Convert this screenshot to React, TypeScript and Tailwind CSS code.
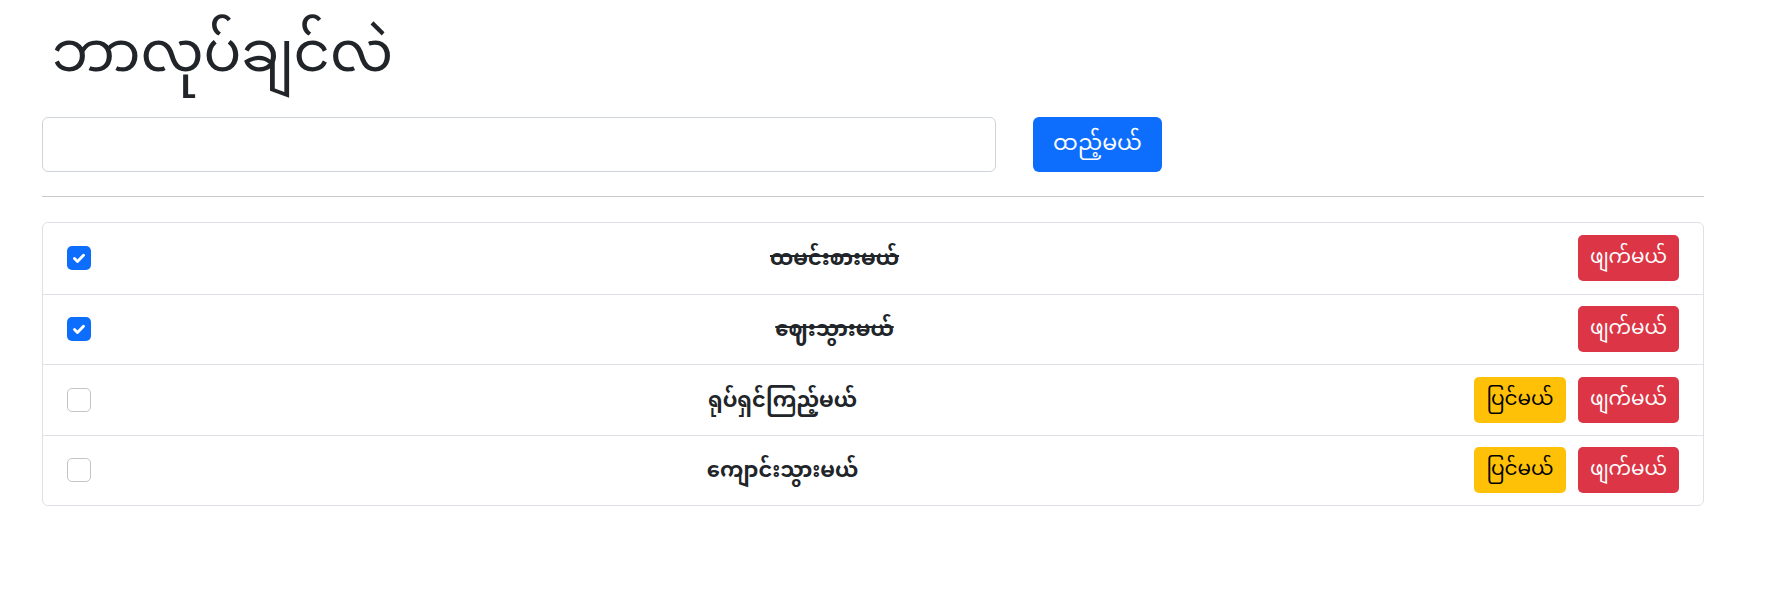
import React from "react";

type Todo = { title: string; done: boolean };

const todos: Todo[] = [
  { title: "ထမင်းစားမယ်", done: true },
  { title: "ဈေးသွားမယ်", done: true },
  { title: "ရုပ်ရှင်ကြည့်မယ်", done: false },
  { title: "ကျောင်းသွားမယ်", done: false },
];

const font = "font-['Noto_Sans_Myanmar','Noto_Sans',sans-serif]";

const CheckBox = ({ checked }: { checked: boolean }) =>
  checked ? (
    <span className="w-6 h-6 rounded-[5px] bg-[#0d6efd] flex items-center justify-center shrink-0">
      <svg width="18" height="18" viewBox="0 0 20 20" fill="none">
        <path
          d="M5 10.5l3.3 3.3L15 7"
          stroke="#fff"
          strokeWidth="3.2"
          strokeLinecap="round"
          strokeLinejoin="round"
        />
      </svg>
    </span>
  ) : (
    <span className="w-6 h-6 rounded-[5px] border border-[#c4c4c4] bg-white shrink-0" />
  );

const App = () => {
  return (
    <div className={`w-full min-h-[598px] bg-white text-[#212529] ${font}`}>
      <div className="w-[1662px] ml-[42px] pt-[8px]">
        <h1 className="h-[109px] pl-[10px] text-[56px] font-normal leading-[100px]">
          ဘာလုပ်ချင်လဲ
        </h1>
        <div className="flex items-center gap-[37px]">
          <input
            className="w-[954px] h-[55px] border border-[#ced4da] rounded-[6px] px-3 outline-none"
            type="text"
          />
          <button className="w-[129px] h-[55px] rounded-[6px] bg-[#0d6efd] text-white text-[22px] pt-[2px]">
            ထည့်မယ်
          </button>
        </div>
        <hr className="mt-[24px] mb-[25px] border-t border-[#c8c9ca]" />
        <ul className="border border-[#dee2e6] rounded-[6px]">
          {todos.map((item, index) => (
            <li
              key={index}
              className={`flex items-center gap-3 h-[70.5px] px-6 ${
                index > 0 ? "border-t border-[#dee2e6]" : ""
              }`}
            >
              <CheckBox checked={item.done} />
              <span
                className={`flex-1 text-center text-[21px] font-bold pt-[5px] ${
                  item.done ? "line-through" : ""
                }`}
              >
                {item.title}
              </span>
              {!item.done && (
                <button className="w-[92px] h-[46px] rounded-[5px] bg-[#ffc107] text-black text-[20px] pt-[2px]">
                  ပြင်မယ်
                </button>
              )}
              <button className="w-[101px] h-[46px] rounded-[5px] bg-[#dc3545] text-white text-[20px] pt-[2px]">
                ဖျက်မယ်
              </button>
            </li>
          ))}
        </ul>
      </div>
    </div>
  );
};

export default App;
